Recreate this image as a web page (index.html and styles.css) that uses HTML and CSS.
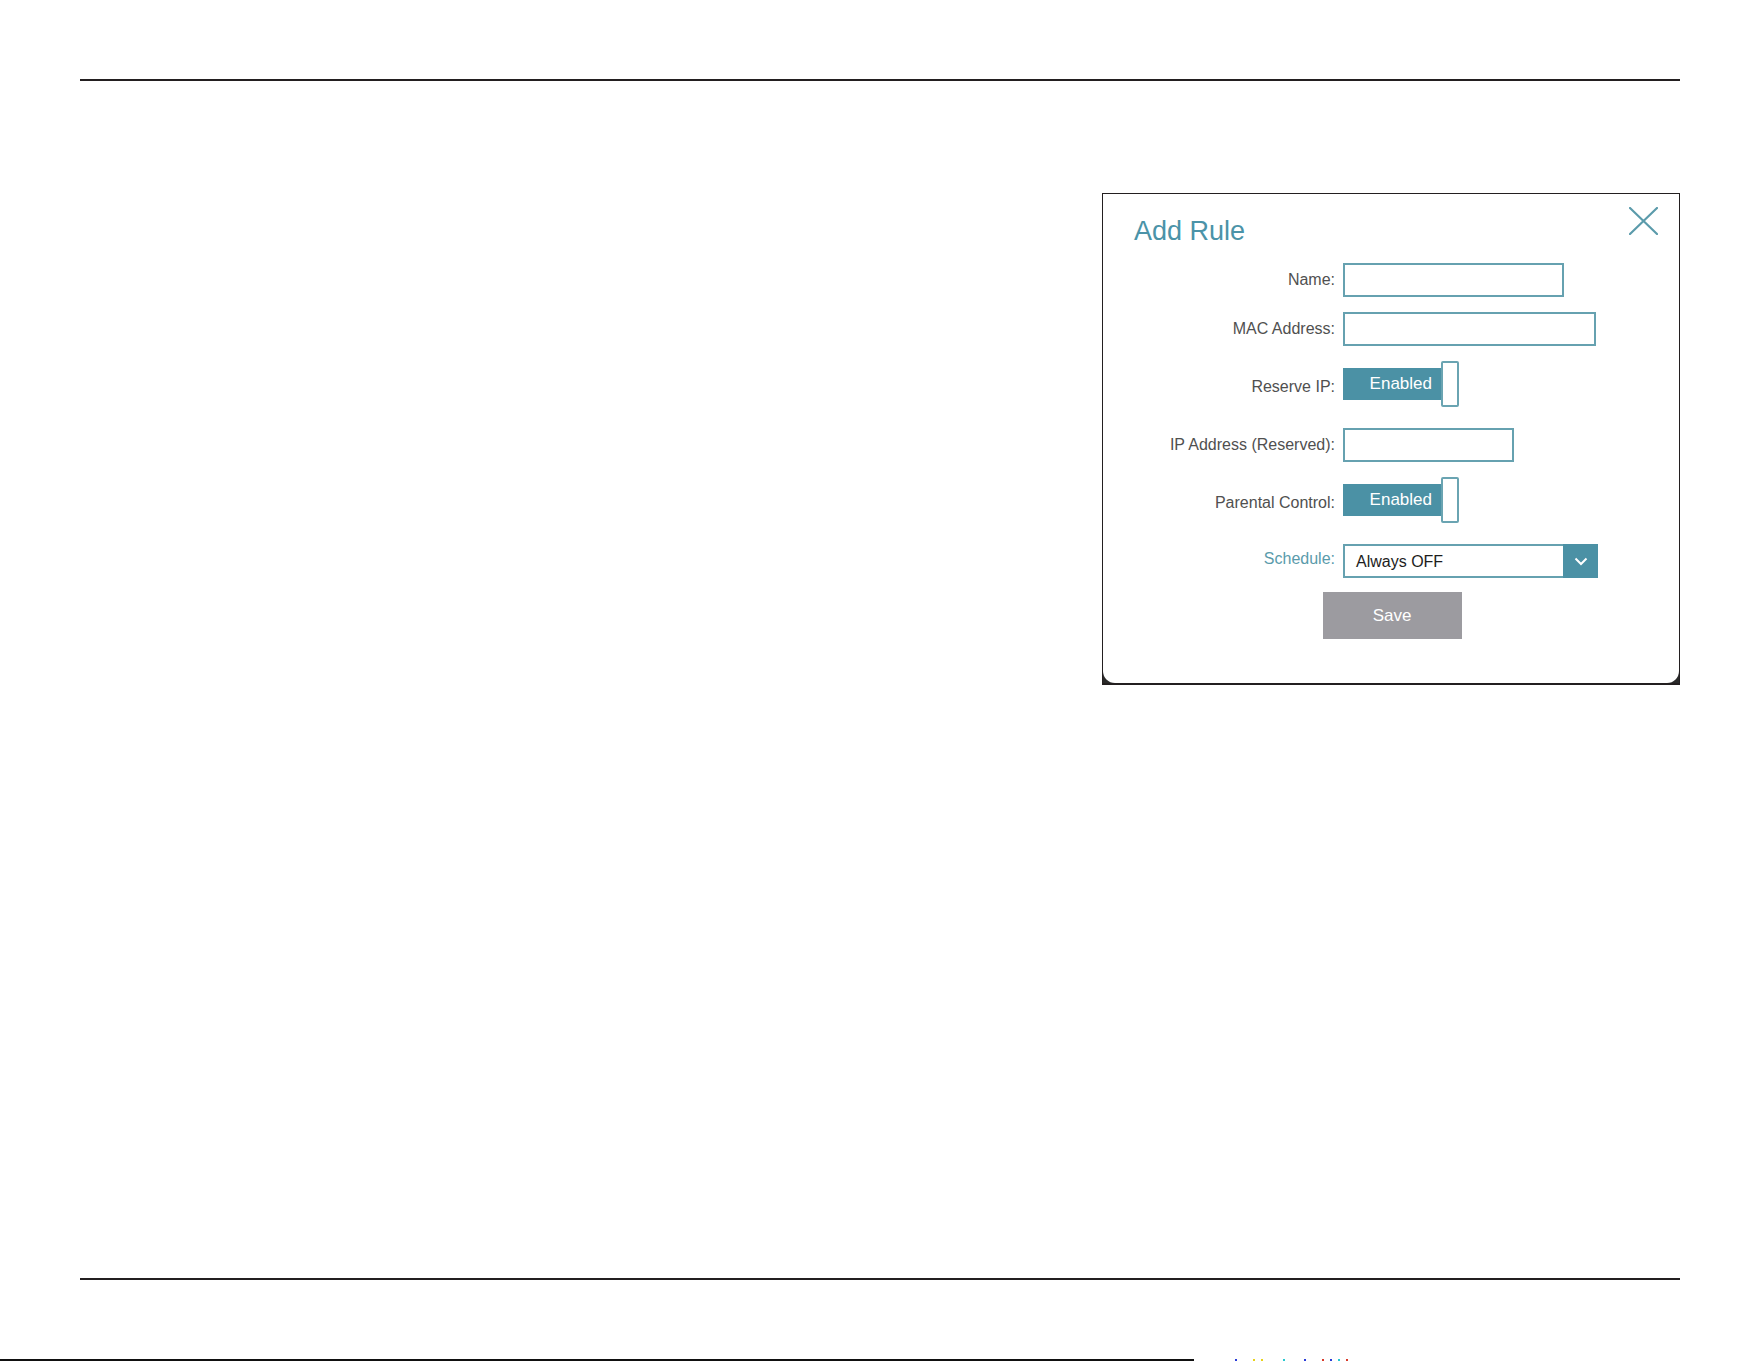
FILE: index.html
```html
<!DOCTYPE html>
<html>

<head>
  <meta charset="utf-8">
  <meta name="viewport" content="width=device-width">
  <title>Add Rule</title>

  <link rel="stylesheet" href="styles.css">
</head>

<body>
  <div class="page">
    <div class="rule rule-top"></div>

    <main class="content">
      <section class="dialog">
        <div class="dialog-body">
          <button class="close" type="button" aria-label="Close">
            <svg width="29" height="28" viewBox="0 0 29 28">
              <path d="M1 1 L28 27 M28 1 L1 27" stroke="#5b9bab" stroke-width="2.2" fill="none" stroke-linecap="round"/>
            </svg>
          </button>

          <h2 class="title">Add Rule</h2>

          <div class="form">
            <div class="row">
              <label class="label">Name:</label>
              <div class="input input-name"></div>
            </div>
            <div class="row">
              <label class="label">MAC Address:</label>
              <div class="input input-mac"></div>
            </div>
            <div class="row row-toggle">
              <label class="label">Reserve IP:</label>
              <div class="toggle">
                <span class="toggle-track">Enabled</span>
                <span class="toggle-knob"></span>
              </div>
            </div>
            <div class="row row-spaced">
              <label class="label">IP Address (Reserved):</label>
              <div class="input input-ip"></div>
            </div>
            <div class="row row-toggle">
              <label class="label">Parental Control:</label>
              <div class="toggle">
                <span class="toggle-track">Enabled</span>
                <span class="toggle-knob"></span>
              </div>
            </div>
            <div class="row row-spaced">
              <label class="label label-link">Schedule:</label>
              <div class="select">
                <span class="select-value">Always OFF</span>
                <span class="select-arrow">
                  <svg width="14" height="9" viewBox="0 0 14 9">
                    <path d="M1.5 1.5 L7 7 L12.5 1.5" stroke="#fff" stroke-width="2" fill="none"/>
                  </svg>
                </span>
              </div>
            </div>
          </div>

          <div class="actions">
            <button class="save" type="button">Save</button>
          </div>
        </div>
      </section>
    </main>

    <div class="rule rule-bottom"></div>

    <div class="scan">
      <span class="scan-line"></span>
      <span class="speck speck-blue"></span>
      <span class="speck speck-yellow"></span>
      <span class="speck speck-yellow"></span>
      <span class="speck speck-cyan"></span>
      <span class="speck speck-blue"></span>
      <span class="speck speck-red"></span>
      <span class="speck speck-blue"></span>
      <span class="speck speck-cyan"></span>
      <span class="speck speck-red"></span>
    </div>
  </div>
</body>

</html>
```

FILE: styles.css
```css
html,
body {
  margin: 0;
  padding: 0;
  background: #fff;
}

body {
  font-family: "Liberation Sans", Arial, sans-serif;
  color: #505050;
}

.page {
  width: 1761px;
  height: 1361px;
  display: flex;
  flex-direction: column;
  overflow: hidden;
}

.rule {
  height: 2px;
  background: #231f20;
  margin-left: 80px;
  width: 1600px;
  flex-shrink: 0;
}

.rule-top {
  margin-top: 79px;
}

.content {
  height: 1197px;
  flex-shrink: 0;
}

/* dialog */

.dialog {
  margin-top: 112px;
  margin-left: 1102px;
  width: 578px;
  box-sizing: border-box;
  border: 1px solid #231f20;
  border-bottom-width: 2px;
  background: #2a2a2a;
}

.dialog-body {
  position: relative;
  height: 489px;
  box-sizing: border-box;
  padding-top: 21px;
  background: #fff;
  border-radius: 0 0 12px 12px;
}

.close {
  position: absolute;
  top: 13px;
  right: 21px;
  padding: 0;
  border: 0;
  background: none;
  line-height: 0;
  cursor: pointer;
}

.title {
  margin: 0 0 16px 31px;
  font-size: 27px;
  line-height: 32px;
  font-weight: normal;
  color: #4b93a8;
}

.form {
  display: flex;
  flex-direction: column;
  gap: 15px;
}

.row {
  display: flex;
  align-items: center;
}

.row-spaced {
  margin-top: 6px;
}

.label {
  width: 240px;
  box-sizing: border-box;
  padding-right: 8px;
  text-align: right;
  font-size: 16px;
  color: #505050;
}

.row-toggle .label {
  padding-top: 6px;
}

.label-link {
  padding-bottom: 4px;
  color: #5a9bab;
}

.input {
  height: 34px;
  box-sizing: border-box;
  border: 2px solid #66a1b0;
  background: #fff;
}

.input-name {
  width: 221px;
}

.input-mac {
  width: 253px;
}

.input-ip {
  width: 171px;
}

/* toggle */

.toggle {
  display: flex;
  align-items: center;
  height: 46px;
}

.toggle-track {
  width: 99px;
  height: 32px;
  box-sizing: border-box;
  padding-right: 10px;
  background: #4b91a5;
  color: #fff;
  font-size: 17px;
  line-height: 32px;
  text-align: right;
}

.toggle-knob {
  width: 18px;
  height: 46px;
  margin-left: -1px;
  box-sizing: border-box;
  border: 2px solid #6aa4b2;
  border-radius: 2px;
  background: #fff;
}

/* select */

.select {
  display: flex;
  width: 255px;
  height: 34px;
  box-sizing: border-box;
  border: 2px solid #66a1b0;
  border-right: 0;
}

.select-value {
  flex: 1;
  padding-left: 11px;
  font-size: 16px;
  line-height: 32px;
  color: #1d1d1d;
}

.select-arrow {
  width: 35px;
  margin: -2px 0;
  display: flex;
  align-items: center;
  justify-content: center;
  background: #4b91a5;
}

/* save */

.actions {
  display: flex;
  justify-content: center;
  margin-top: 14px;
  padding-left: 2px;
}

.save {
  width: 139px;
  height: 47px;
  border: 0;
  background: #9c9ba0;
  color: #fff;
  font-family: inherit;
  font-size: 17px;
  cursor: pointer;
}

/* scan artefacts at the very bottom */

.scan {
  display: flex;
  align-items: flex-end;
  margin-top: 79px;
  height: 2px;
}

.scan-line {
  width: 1194px;
  height: 2px;
  background: #111;
}

.speck {
  width: 2px;
  height: 2px;
  margin-left: 6px;
}

.speck:nth-child(2) {
  margin-left: 41px;
}

.speck:nth-child(3) {
  margin-left: 16px;
}

.speck:nth-child(5) {
  margin-left: 20px;
}

.speck:nth-child(6) {
  margin-left: 19px;
}

.speck:nth-child(7) {
  margin-left: 16px;
}

.speck-blue {
  background: #2a3cd8;
}

.speck-yellow {
  background: #e8d21a;
}

.speck-cyan {
  background: #28c8d0;
}

.speck-red {
  background: #d83a2a;
}
```
